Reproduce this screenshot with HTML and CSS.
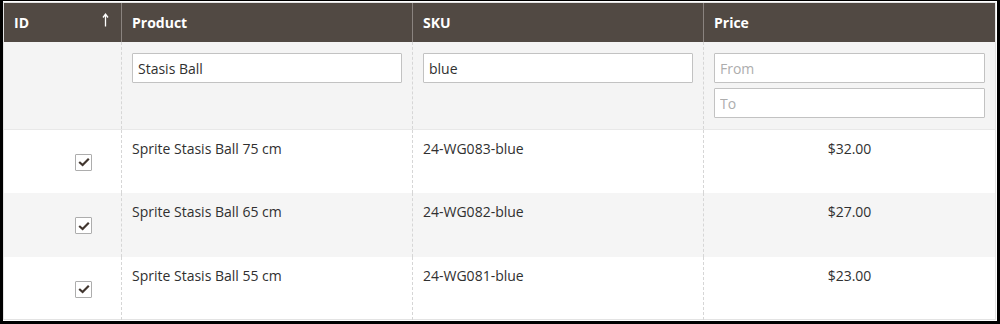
FILE: index.html
```html
<!DOCTYPE html>
<html lang="en">

<head>
    <meta charset="UTF-8">
    <title>Products Grid</title>
    <link rel="stylesheet" href="styles.css">
</head>

<body>
    <div class="frame">
        <div class="data-grid">
            <div class="grid-row grid-head">
                <div class="th th-id">
                    <span>ID</span>
                    <svg class="sort-arrow" width="7" height="14" viewBox="0 0 7 14">
                        <path d="M3.5 13.5 V1.5 M1 4.5 L3.5 1.2 L6 4.5" fill="none" stroke="#fff" stroke-width="1.3" />
                    </svg>
                </div>
                <div class="th">Product</div>
                <div class="th">SKU</div>
                <div class="th">Price</div>
            </div>

            <div class="grid-row grid-filters">
                <div class="td"></div>
                <div class="td"><input class="control-text" type="text" value="Stasis Ball"></div>
                <div class="td"><input class="control-text" type="text" value="blue"></div>
                <div class="td range">
                    <input class="control-text" type="text" placeholder="From">
                    <input class="control-text" type="text" placeholder="To">
                </div>
            </div>

            <div class="grid-row item">
                <div class="td checkbox-cell"><span class="checkbox"><svg width="12" height="10" viewBox="0 0 12 10"><path d="M1.2 5 L4.6 8 L10.8 1.8" fill="none" stroke="#41362f" stroke-width="2.2" /></svg></span></div>
                <div class="td">Sprite Stasis Ball 75 cm</div>
                <div class="td">24-WG083-blue</div>
                <div class="td price">$32.00</div>
            </div>
            <div class="grid-row item">
                <div class="td checkbox-cell"><span class="checkbox"><svg width="12" height="10" viewBox="0 0 12 10"><path d="M1.2 5 L4.6 8 L10.8 1.8" fill="none" stroke="#41362f" stroke-width="2.2" /></svg></span></div>
                <div class="td">Sprite Stasis Ball 65 cm</div>
                <div class="td">24-WG082-blue</div>
                <div class="td price">$27.00</div>
            </div>
            <div class="grid-row item">
                <div class="td checkbox-cell"><span class="checkbox"><svg width="12" height="10" viewBox="0 0 12 10"><path d="M1.2 5 L4.6 8 L10.8 1.8" fill="none" stroke="#41362f" stroke-width="2.2" /></svg></span></div>
                <div class="td">Sprite Stasis Ball 55 cm</div>
                <div class="td">24-WG081-blue</div>
                <div class="td price">$23.00</div>
            </div>
        </div>
    </div>
</body>

</html>
```

FILE: styles.css
```css
* {
    margin: 0;
    padding: 0;
    box-sizing: border-box;
}

body {
    font-family: 'Open Sans', 'Liberation Sans', sans-serif;
    background-color: #fff;
    color: #303030;
}

.frame {
    width: 1000px;
    height: 324px;
    border-style: solid;
    border-color: #000;
    border-width: 1px 3px 3px 3px;
    padding: 1px 1px 1px 0;
}

.data-grid {
    border: 1px solid #e3e3e3;
    height: 318px;
}

.grid-row {
    display: grid;
    grid-template-columns: 117px 291px 291px 292px;
}

/* header */

.grid-head {
    height: 39px;
    background-color: #514943;
}

.th {
    color: #fff;
    font-size: 14px;
    font-weight: 700;
    padding: 0 10px;
    display: flex;
    align-items: center;
    border-left: 1px solid #8a837f;
}

.th-id {
    border-left: none;
    justify-content: space-between;
}

.sort-arrow {
    margin-right: 2px;
    margin-top: -6px;
}

/* filters */

.grid-filters {
    height: 88px;
    background-color: #f4f4f4;
    border-bottom: 1px solid #e8e8e8;
}

.td {
    font-size: 14px;
    line-height: 18px;
    padding: 10px;
    border-left: 1px dashed #d6d6d6;
}

.td:first-child {
    border-left: none;
}

.grid-filters .td {
    padding-top: 11px;
}

.control-text {
    display: block;
    width: 100%;
    height: 30px;
    border: 1px solid #c2c2c2;
    border-radius: 1px;
    background-color: #fff;
    font-family: inherit;
    font-size: 14px;
    color: #303030;
    padding: 0 5px;
    outline: none;
}

.control-text::placeholder {
    color: #adadad;
}

.range .control-text + .control-text {
    margin-top: 5px;
}

/* rows */

.item {
    height: 63px;
}

.item:nth-child(even) {
    background-color: #f5f5f5;
    height: 64px;
}

.checkbox-cell {
    display: flex;
    align-items: center;
    justify-content: flex-end;
}

.item .checkbox-cell {
    padding: 0 29px 0 0;
}

.checkbox {
    width: 17px;
    height: 17px;
    border: 1px solid #adadad;
    border-radius: 1px;
    background-color: #fff;
    display: flex;
    align-items: center;
    justify-content: center;
    margin-top: 1px;
}

.price {
    text-align: center;
}
```
